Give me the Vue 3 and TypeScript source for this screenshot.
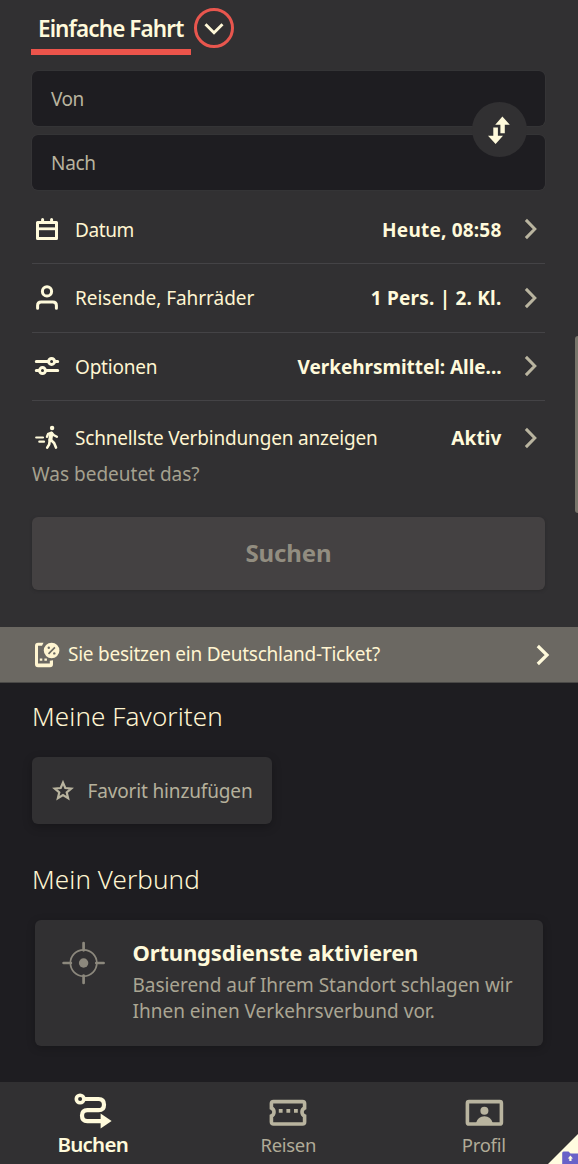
<script setup lang="ts">
type IconName = 'calendar' | 'person' | 'sliders' | 'walker'

interface OptionRow {
  icon: IconName
  label: string
  value: string
  key: string
}

interface NavItem {
  key: string
  label: string
  active?: boolean
}

const optionRows: OptionRow[] = [
  { key: 'date', icon: 'calendar', label: 'Datum', value: 'Heute, 08:58' },
  { key: 'travellers', icon: 'person', label: 'Reisende, Fahrräder', value: '1 Pers. | 2. Kl.' },
  { key: 'options', icon: 'sliders', label: 'Optionen', value: 'Verkehrsmittel: Alle...' },
  { key: 'fastest', icon: 'walker', label: 'Schnellste Verbindungen anzeigen', value: 'Aktiv' },
]

const navItems: NavItem[] = [
  { key: 'book', label: 'Buchen', active: true },
  { key: 'trips', label: 'Reisen' },
  { key: 'profile', label: 'Profil' },
]
</script>

<template>
  <div class="screen">
    <section class="search">
      <div class="tabs">
        <div class="tab">Einfache Fahrt</div>
        <button class="expand" aria-label="Mehr">
          <svg width="20" height="14" viewBox="0 0 20 14"><path d="M1.5 2.2 10 10.8 18.5 2.2" fill="none" stroke="#fff8d8" stroke-width="2.9" /></svg>
        </button>
      </div>

      <div class="fields">
        <div class="field"><span class="von">Von</span></div>
        <div class="field"><span class="nach">Nach</span></div>
        <button class="swap" aria-label="Tauschen">
          <svg width="24" height="30" viewBox="0 0 24 30" fill="#fffadb">
            <path d="M15.4 1.5 22.8 9.7H17.8V18.3H13.4V9.7H8.2Z" />
            <path d="M8.6 29 1 20.7H6.3V12.4H10.9V20.7H16Z" />
          </svg>
        </button>
      </div>

      <div v-for="row in optionRows" :key="row.key" class="row" :class="row.key">
        <svg class="row-icon" width="30" height="30" viewBox="0 0 30 30" fill="none" stroke="#fffadb" stroke-width="2.8">
          <g v-if="row.icon === 'calendar'">
            <path d="M5.5 8.4H24.5V24.4H5.5Z" stroke-width="3" stroke-linejoin="round" />
            <path d="M5.5 14.8H24.5" stroke-width="2.8" />
            <path d="M10.6 5.4V8M19.6 5.4V8" stroke-width="3" stroke-linecap="round" />
          </g>
          <g v-else-if="row.icon === 'person'" stroke-width="3">
            <circle cx="15" cy="8.4" r="4.6" />
            <path d="M5.6 25.2V22.5Q5.6 18.9 9.2 18.9H20.8Q24.4 18.9 24.4 22.5V25.2" stroke-linecap="round" />
          </g>
          <g v-else-if="row.icon === 'sliders'" stroke-width="3" stroke-linecap="round">
            <path d="M4.3 10.4H16M23 10.4H25.7M4.3 19.6H7M14 19.6H25.7" />
            <circle cx="19.6" cy="10.4" r="3" />
            <circle cx="10.5" cy="19.6" r="3" />
          </g>
          <g v-else stroke-linecap="round" stroke-linejoin="round">
            <circle cx="20.1" cy="5" r="2.2" fill="#fffadb" stroke="none" />
            <path d="M4.2 14.5H11M7.3 18.7H12" stroke-width="2.2" />
            <path d="M15 13.8 16.2 10.8 19.2 9.9 22 12.2 24.9 13.7" stroke-width="2.4" />
            <path d="M19.4 10.4 18.3 16.8" stroke-width="4" />
            <path d="M17.8 16.8 17.2 21.3 15.2 24.6M19.2 17.2 22.1 20 24 24.6" stroke-width="2.6" />
          </g>
        </svg>
        <span class="row-label">{{ row.label }}</span>
        <span class="row-value">{{ row.value }}</span>
        <svg class="chevron" width="14" height="22" viewBox="0 0 14 22"><path d="M1.9 1.9 10.8 11 1.9 20.1" fill="none" stroke="#b9b49f" stroke-width="3" /></svg>
      </div>

      <div class="hint">Was bedeutet das?</div>
      <button class="submit">Suchen</button>
    </section>

    <section class="banner">
      <svg width="27" height="28" viewBox="0 0 27 28">
        <path d="M10.5 1.8H5Q2 1.8 2 4.8V23.2Q2 26.2 5 26.2H17Q20 26.2 20 23.2V19.2L16.8 19.8V22.6H5V4.8H9Z" fill="#fff5d1" />
        <path d="M6.8 17.4H9.3V19.8H6.8ZM11.4 17.4H13.9V19.8H11.4Z" fill="#fff5d1" />
        <circle cx="18.6" cy="9.5" r="7.8" fill="#fff5d1" />
        <path d="M15.5 12.9 21.9 6.4" stroke="#6b6862" stroke-width="1.6" />
        <circle cx="15.8" cy="6.8" r="1.2" fill="#6b6862" />
        <circle cx="21.3" cy="12.4" r="1.2" fill="#6b6862" />
      </svg>
      <span class="banner-text">Sie besitzen ein Deutschland-Ticket?</span>
      <svg width="14" height="22" viewBox="0 0 14 22"><path d="M1.8 2 11 11 1.8 20" fill="none" stroke="#fffadb" stroke-width="3.2" /></svg>
    </section>

    <main class="content">
      <h2>Meine Favoriten</h2>
      <button class="favorite">
        <svg width="24" height="24" viewBox="0 0 24 24"><path d="M12 3.6 14.3 9 20.2 9.5 15.7 13.3 17.1 19.1 12 16 6.9 19.1 8.3 13.3 3.8 9.5 9.7 9Z" fill="none" stroke="#b9b49f" stroke-width="2.2" /></svg>
        <span>Favorit hinzufügen</span>
      </button>
      <h2 class="network-title">Mein Verbund</h2>
      <article class="network">
        <svg width="44" height="44" viewBox="0 0 44 44" fill="none" stroke="#8c887d">
          <circle cx="21.6" cy="22" r="13.2" stroke-width="1.7" />
          <circle cx="21.6" cy="22" r="4.7" fill="#8c887d" stroke="none" />
          <path d="M21.6 2V9.3M21.6 34.7V42M1.6 22H8.9M34.3 22H41.6" stroke-width="2.7" stroke-linecap="round" />
        </svg>
        <div class="network-copy">
          <h3>Ortungsdienste aktivieren</h3>
          <p><span class="line-a">Basierend auf Ihrem Standort schlagen wir</span><br>Ihnen einen Verkehrsverbund vor.</p>
        </div>
      </article>
    </main>

    <nav class="nav">
      <div v-for="item in navItems" :key="item.key" class="nav-item" :class="[item.key, { active: item.active }]">
        <svg v-if="item.key === 'book'" width="40" height="38" viewBox="0 0 40 38">
          <circle cx="7.1" cy="7" r="3.8" fill="none" stroke="#fffadb" stroke-width="3.6" />
          <path d="M11 7H25.6Q31 7 31 12.7Q31 18.2 25.6 18.2H14.3Q9 18.2 9 23.6Q9 29.2 14.3 29.2H28" fill="none" stroke="#fffadb" stroke-width="4.2" />
          <path d="M27.6 21.6 38.6 29 27.6 36.4Z" fill="#fffadb" />
        </svg>
        <svg v-else-if="item.key === 'trips'" width="40" height="38" viewBox="0 0 40 38">
          <path d="M5.5 9.6H34.5Q36.6 9.6 36.6 11.6V16Q34 17.2 34 20Q34 22.8 36.6 24V30Q36.6 32 34.5 32H5.5Q3.4 32 3.4 30V24Q6 22.8 6 20Q6 17.2 3.4 16V11.6Q3.4 9.6 5.5 9.6Z" fill="none" stroke="#b9b49f" stroke-width="3.6" />
          <path d="M10.8 17H14.6V20.8H10.8ZM18.4 17H22.2V20.8H18.4ZM26 17H29.8V20.8H26Z" fill="#b9b49f" />
        </svg>
        <svg v-else width="40" height="38" viewBox="0 0 40 38">
          <rect x="3.4" y="9.6" width="34" height="22.4" rx="1.6" fill="none" stroke="#b9b49f" stroke-width="3.6" />
          <circle cx="20.4" cy="18.8" r="4" fill="#b9b49f" />
          <path d="M12 31Q14 24.2 20.4 24.2Q26.8 24.2 28.8 31Z" fill="#b9b49f" />
        </svg>
        <span>{{ item.label }}</span>
      </div>
    </nav>

    <div class="scrollbar"></div>
    <svg class="corner" width="30" height="30" viewBox="0 0 30 30">
      <path d="M30 0V30H0Z" fill="#fffce0" />
      <path d="M14.2 19Q14.2 17.4 15.7 17.4H20.5L22.5 19.4H30V30H14.2Z" fill="#6862c8" />
      <path d="M22.4 21.4 25 24.4H23.5V27H21.3V24.4H19.8Z" fill="#fffce0" />
    </svg>
  </div>
</template>

<style>
body {
  background: #1e1d21;
}
</style>

<style scoped>
.screen {
  position: relative;
  display: flex;
  flex-direction: column;
  width: 578px;
  height: 1164px;
  overflow: hidden;
  background: #1e1d21;
  color: #fff5d1;
  font-family: "Noto Sans", "Open Sans", sans-serif;
  font-size: 19px;
  line-height: 26px;
  white-space: nowrap;
}
svg {
  display: block;
  flex: none;
}
button {
  border: 0;
  padding: 0;
  margin: 0;
  font: inherit;
  color: inherit;
}
.search {
  box-sizing: border-box;
  height: 627px;
  padding: 0 33px 0 32px;
  background: #313032;
}
.tabs {
  display: flex;
  align-items: flex-start;
  height: 70.5px;
  margin-left: -1px;
}
.tab {
  box-sizing: border-box;
  width: 160px;
  height: 55px;
  padding: 14px 0 0 7px;
  border-bottom: 6px solid #ec544b;
  font-size: 22.5px;
  line-height: 30px;
  font-weight: 600;
  letter-spacing: -0.9px;
  color: #fffadb;
}
.expand {
  box-sizing: border-box;
  display: flex;
  align-items: center;
  justify-content: center;
  width: 40px;
  height: 40px;
  margin: 8px 0 0 3px;
  padding-top: 2px;
  border: 3px solid #e8564e;
  border-radius: 50%;
  background: none;
}
.fields {
  position: relative;
  display: grid;
  gap: 9px;
}
.field {
  display: flex;
  align-items: center;
  height: 55px;
  padding: 1px 0 0 19px;
  box-sizing: border-box;
  border-radius: 6px;
  background: #1e1d21;
  box-shadow: 0 0 0 0.6px #39383a;
  color: #b9b49f;
}
.von { letter-spacing: -0.5px; }
.nach { letter-spacing: -0.3px; }
.swap {
  position: absolute;
  top: 31.5px;
  right: 18.5px;
  display: flex;
  align-items: center;
  justify-content: center;
  width: 55px;
  height: 55px;
  border-radius: 50%;
  background: #313032;
}
.row {
  box-sizing: border-box;
  display: flex;
  align-items: center;
  height: 68.5px;
  border-bottom: 1.5px solid #444346;
}
.date { margin-top: 6px; }
.fastest {
  height: 74px;
  border-bottom: 0;
}
.row-label { margin-left: 13px; }
.date .row-label,
.date .row-value,
.options .row-label,
.options .row-value { padding-top: 1px; }
.date .row-label { letter-spacing: -0.4px; }
.travellers .row-label { letter-spacing: -0.03px; }
.options .row-label { letter-spacing: -0.2px; }
.fastest .row-label { letter-spacing: -0.18px; }
.row-value {
  margin-left: auto;
  margin-right: 22px;
  font-weight: 700;
  color: #fffadb;
}
.date .row-value { letter-spacing: 0.2px; }
.travellers .row-value { letter-spacing: 0.2px; }
.options .row-value { letter-spacing: -0.05px; }
.fastest .row-value { letter-spacing: 0.1px; }
.chevron { margin-right: 7.5px; }
.hint {
  margin-top: -14px;
  color: #a5a18f;
}
.submit {
  display: block;
  width: 513px;
  height: 73px;
  margin-top: 30px;
  padding-bottom: 2px;
  border-radius: 6px;
  background: #444142;
  box-shadow: 0 1px 3px #2a292b;
  color: #928d80;
  font-size: 24px;
  font-weight: 700;
  letter-spacing: -0.1px;
}
.banner {
  box-sizing: border-box;
  display: flex;
  align-items: center;
  height: 56px;
  padding: 0 28px 0 33px;
  border-bottom: 1px solid #4a4947;
  background: #6b6862;
}
.banner-text {
  flex: 1;
  margin: -2px 0 0 8px;
  letter-spacing: -0.25px;
}
.content {
  flex: 1;
  padding: 0 32px;
}
h2 {
  margin: 15px 0 0;
  font-size: 26px;
  line-height: 36px;
  font-weight: 300;
  letter-spacing: 0.1px;
}
.favorite {
  display: flex;
  align-items: center;
  gap: 13px;
  width: 240px;
  height: 67px;
  margin-top: 23px;
  padding-left: 18.5px;
  border-radius: 6px;
  background: #313032;
  box-shadow: 0 3px 10px rgba(0, 0, 0, 0.25);
  color: #b5b09c;
  letter-spacing: -0.15px;
}
.network-title { margin-top: 37px; }
.network {
  box-sizing: border-box;
  display: flex;
  width: 507.5px;
  height: 126px;
  margin: 23.4px 0 0 3px;
  padding: 21px 27px;
  border-radius: 6px;
  background: #313032;
  box-shadow: 0 2px 8px rgba(0, 0, 0, 0.22);
}
.network-copy { margin: -3px 0 0 26.5px; }
h3 {
  margin: 0;
  font-size: 22px;
  line-height: 29px;
  font-weight: 700;
  letter-spacing: -0.16px;
  color: #fffadb;
}
p {
  margin: 5px 0 0;
  color: #aaa593;
}
.line-a { letter-spacing: -0.05px; }
.nav {
  display: flex;
  height: 82px;
  padding-left: 3px;
  margin-left: -8px;
  background: #313032;
}
.nav-item {
  display: flex;
  flex: none;
  flex-direction: column;
  align-items: center;
  width: 195.5px;
  padding-top: 10px;
  box-sizing: border-box;
  color: #b0ab98;
  font-size: 18.5px;
}
.nav-item span {
  margin-top: 2px;
  letter-spacing: -0.3px;
}
.nav-item.active span {
  margin-top: 1px;
  color: #fffadb;
  font-size: 20.5px;
  font-weight: 600;
  letter-spacing: -0.75px;
}
.scrollbar {
  position: absolute;
  top: 336px;
  right: -3px;
  width: 6px;
  height: 177px;
  border-radius: 3px;
  background: #78756b;
}
.corner {
  position: absolute;
  right: 0;
  bottom: 0;
}
</style>
